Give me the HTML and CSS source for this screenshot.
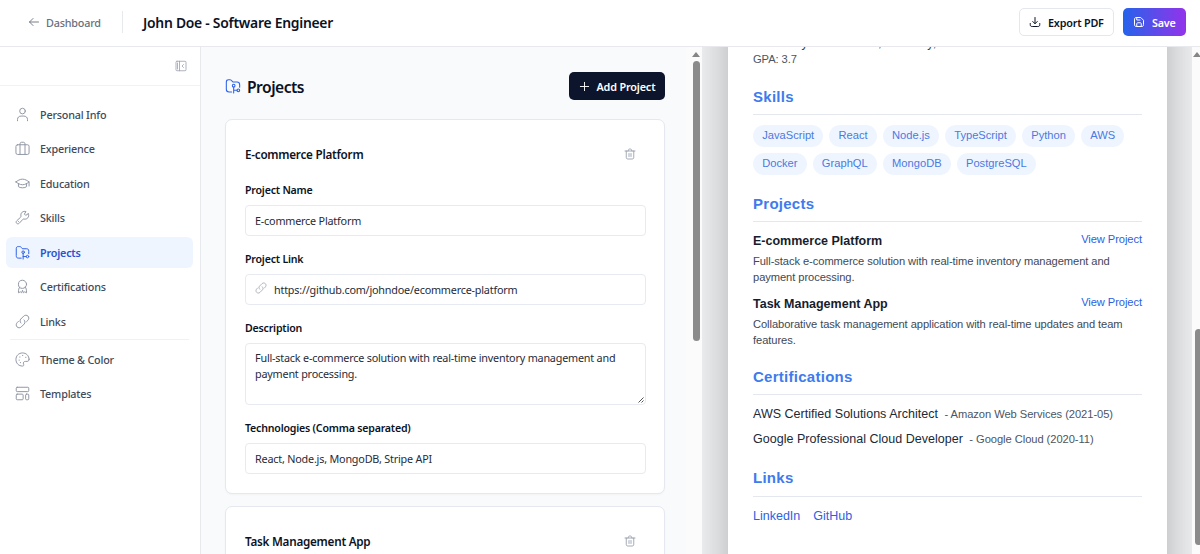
FILE: index.html
```html
<!DOCTYPE html>
<html lang="en">
<head>
<meta charset="utf-8">
<title>John Doe - Software Engineer</title>
<link rel="stylesheet" href="styles.css">
</head>
<body>
<svg class="defs" width="0" height="0">
  <symbol id="folder" viewBox="0 0 24 24"><path d="M10 21H6C3 21 2 20 2 17V6C2 3.500 3 2.500 5.500 2.500H7.500C9.300 2.500 9.800 3.300 10.500 4.500C11 5.500 11.500 6 12.500 6H18C21 6 22 7 22 10V14"/><circle cx="13" cy="11.500" r="2"/><path d="M13 13.500V22.500M13 18.500H18"/><circle cx="20" cy="18.500" r="2"/></symbol>
  <symbol id="link" viewBox="0 0 24 24"><path d="M9.500 14.500C7.500 12.500 7.500 9.800 9.300 8L14 3.300C16 1.500 18.800 1.500 20.700 3.300C22.500 5.200 22.500 8 20.700 10L18.500 12.200"/><path d="M14.500 9.500C16.500 11.500 16.500 14.200 14.700 16L10 20.700C8 22.500 5.200 22.500 3.300 20.700C1.500 18.800 1.500 16 3.300 14L5.500 11.800"/></symbol>
  <symbol id="trash" viewBox="0 0 24 24"><path d="M4.500 6V18.500C4.500 21 5.500 22 8 22H16C18.500 22 19.500 21 19.500 18.500V6M2 6H22M8 6L9 3.500C9.500 2.300 10 2 11 2H13C14 2 14.500 2.300 15 3.500L16 6M10 11V17M14 11V17"/></symbol>
</svg>
<header class="topbar">
  <a class="back"><svg class="icon back-icon" viewBox="0 0 24 24"><path d="M21 12H3M10 5L3 12L10 19"/></svg><span>Dashboard</span></a>
  <h1 class="doc-title">John Doe - Software Engineer</h1>
  <div class="actions">
    <button class="btn export"><svg class="icon" viewBox="0 0 24 24"><path d="M12 3V15M7.500 11L12 15.500L16.500 11M2.500 15V17C2.500 20 3.500 21 6.500 21H17.500C20.500 21 21.500 20 21.500 17V15"/></svg><span>Export PDF</span></button>
    <button class="btn save"><svg class="icon" viewBox="0 0 24 24"><path d="M3 7C3 4 4 3 7 3H15.500L21 8.500V17C21 20 20 21 17 21H7C4 21 3 20 3 17ZM7.500 21V16C7.500 14 8 13.500 10 13.500H14C16 13.500 16.500 14 16.500 16V21M7.500 3V8H14"/></svg><span>Save</span></button>
  </div>
</header>
<main class="workspace">
  <aside class="sidebar">
    <div class="collapse"><svg class="icon" viewBox="0 0 24 24"><rect x="2" y="2.500" width="20" height="19" rx="2"/><path d="M9 2.500V21.500M5 6V18M17 9L14 12L17 15"/></svg></div>
    <nav class="nav">
      <a class="item"><svg class="icon" viewBox="0 0 24 24"><circle cx="12" cy="6.500" r="4.500"/><path d="M4 22V20C4 16.500 6.500 14.500 10 14.500H14C17.500 14.500 20 16.500 20 20V22"/></svg><span>Personal Info</span></a>
      <a class="item"><svg class="icon" viewBox="0 0 24 24"><rect x="1.500" y="6" width="21" height="15.500" rx="2.500"/><path d="M8 21.500V5C8 3 9 2 10.500 2H13.500C15 2 16 3 16 5V21.500"/></svg><span>Experience</span></a>
      <a class="item"><svg class="icon" viewBox="0 0 24 24"><path d="M1.500 9.500C4 7.500 8 5 12 5C16 5 20 7.500 22.500 9.500C20 11.500 16 14 12 14C8 14 4 11.500 1.500 9.500ZM5.500 12V17C8 19.500 16 19.500 18.500 17V12M22.500 9.500V16"/></svg><span>Education</span></a>
      <a class="item"><svg class="icon" viewBox="0 0 24 24"><path d="M20.500 6.500L17 8.500L15 6.500L17.500 2.500C13 1 8.500 4.500 9.500 9.500C9.700 10.500 9.500 11 9 11.500L3 17C1.500 18.500 1.500 20 2.700 21.300C4 22.500 5.500 22.500 7 21L12.500 15C13 14.500 13.500 14.300 14.500 14.500C19.500 15.500 23.500 11 21.500 6Z"/><path d="M5.500 18.500H5.600"/></svg><span>Skills</span></a>
      <a class="item active"><svg class="icon"><use href="#folder"/></svg><span>Projects</span></a>
      <a class="item"><svg class="icon" viewBox="0 0 24 24"><circle cx="12" cy="8.500" r="6.500"/><path d="M7.500 13C6 14.500 5.500 17.500 5.500 22L8.500 20.500L10.500 22L12 18L13.500 22L15.500 20.500L18.500 22C18.500 17.500 18 14.500 16.500 13"/></svg><span>Certifications</span></a>
      <a class="item"><svg class="icon"><use href="#link"/></svg><span>Links</span></a>
      <hr class="nav-rule">
      <a class="item"><svg class="icon" viewBox="0 0 24 24"><path d="M22.500 11.500C22.500 6 18 1.500 12 1.500S1.500 6 1.500 12S6 22.500 12 22.500C14 22.500 14.500 21 13.700 19.500C12.500 17 14 15 17 15H19.500C21.500 15 22.500 14 22.500 11.500Z"/><path d="M6.500 13H7M7.500 8H8M12 5.500H12.500M17 8.500H17.500M8.500 17H9"/></svg><span>Theme &amp; Color</span></a>
      <a class="item"><svg class="icon" viewBox="0 0 24 24"><rect x="2" y="2" width="20" height="7" rx="1.500"/><rect x="2" y="13" width="11" height="9" rx="1.500"/><rect x="17" y="13" width="5" height="9" rx="1.500"/></svg><span>Templates</span></a>
    </nav>
  </aside>
  <section class="editor">
    <div class="editor-body">
      <div class="editor-head">
        <svg class="icon head-icon"><use href="#folder"/></svg>
        <h2>Projects</h2>
        <button class="btn add"><svg class="icon" viewBox="0 0 24 24"><path d="M12 3V21M3 12H21"/></svg><span>Add Project</span></button>
      </div>
      <article class="card">
        <div class="card-head"><h3>E-commerce Platform</h3><svg class="icon trash"><use href="#trash"/></svg></div>
        <div class="field"><label>Project Name</label><div class="input">E-commerce Platform</div></div>
        <div class="field"><label>Project Link</label><div class="input"><svg class="icon input-icon"><use href="#link"/></svg><span class="url">https://github.com/johndoe/ecommerce-platform</span></div></div>
        <div class="field"><label>Description</label><div class="input area"><span class="desc">Full-stack e-commerce solution with real-time inventory management and<br>payment processing.</span><svg class="grip" viewBox="0 0 6 6"><path d="M0.500 5.500L5.500 0.500M3.500 5.500L5.500 3.500"/></svg></div></div>
        <div class="field"><label>Technologies (Comma separated)</label><div class="input">React, Node.js, MongoDB, Stripe API</div></div>
      </article>
      <article class="card">
        <div class="card-head"><h3>Task Management App</h3><svg class="icon trash"><use href="#trash"/></svg></div>
      </article>
    </div>
    <div class="scrollbar"><i class="arrow"></i><i class="thumb"></i></div>
  </section>
  <section class="preview">
    <div class="paper">
      <p class="school">University of California, Berkeley,</p>
      <p class="gpa">GPA: 3.7</p>
      <h2 class="sec">Skills</h2>
      <div class="chips"><span>JavaScript</span><span>React</span><span>Node.js</span><span>TypeScript</span><span>Python</span><span>AWS</span><span>Docker</span><span>GraphQL</span><span>MongoDB</span><span>PostgreSQL</span></div>
      <h2 class="sec">Projects</h2>
      <div class="project"><div class="project-head"><h3>E-commerce Platform</h3><a>View Project</a></div><p>Full-stack e-commerce solution with real-time inventory management and<br>payment processing.</p></div>
      <div class="project"><div class="project-head"><h3>Task Management App</h3><a>View Project</a></div><p>Collaborative task management application with real-time updates and team<br>features.</p></div>
      <h2 class="sec">Certifications</h2>
      <div class="certs">
        <p>AWS Certified Solutions Architect <small>- Amazon Web Services (2021-05)</small></p>
        <p>Google Professional Cloud Developer <small>- Google Cloud (2020-11)</small></p>
      </div>
      <h2 class="sec link-sec">Links</h2>
      <div class="links"><a>LinkedIn</a><a>GitHub</a></div>
    </div>
    <div class="scrollbar side"><i class="arrow"></i><i class="thumb"></i></div>
  </section>
</main>
</body>
</html>
```
FILE: styles.css
```css
* { box-sizing: border-box; margin: 0; padding: 0; }
body { width: 1200px; height: 554px; overflow: hidden; background: #fff; color: #0b1224; font-family: "Noto Sans", "Open Sans", sans-serif; font-size: 10.8px; letter-spacing: -.2px; }
button { font: inherit; letter-spacing: inherit; border: 0; }
span, h1, h2, h3, label { white-space: nowrap; }
.defs { position: absolute; }
.icon { width: 15px; height: 15px; flex: none; fill: none; stroke: currentColor; stroke-width: 1.6; stroke-linecap: round; stroke-linejoin: round; }

.topbar { height: 47px; border-bottom: 1px solid #e7e9ed; display: flex; align-items: center; padding: 0 14px 2px 28px; }
.back { display: flex; align-items: center; gap: 6px; width: 95px; height: 22px; border-right: 1px solid #e7e9ed; color: #667080; font-weight: 500; }
.back .icon { width: 12px; height: 12px; stroke-width: 1.8; }
.doc-title { margin: 1px 0 0 20px; font-size: 13.9px; font-weight: 600; letter-spacing: -.26px; }
.actions { margin-left: auto; display: flex; gap: 9px; }
.btn { height: 28px; border-radius: 5px; display: flex; align-items: center; font-weight: 600; }
.export { width: 95px; background: #fff; border: 1px solid #e5e7ee; padding-left: 9px; gap: 7px; color: #0b1224; }
.save { width: 63px; padding-left: 10px; gap: 7px; color: #fff; background: linear-gradient(90deg, #2563eb, #9333ea); }
.export .icon, .save .icon { width: 12px; height: 12px; stroke-width: 2; }

.workspace { display: flex; height: 507px; }
.sidebar { width: 201px; border-right: 1px solid #e7e9ed; background: #fff; }
.collapse { height: 39px; border-bottom: 1px solid #f1f2f4; display: flex; align-items: center; justify-content: flex-end; padding-right: 13px; color: #9a9fae; }
.collapse .icon { width: 12px; height: 12px; }
.nav { padding: 13px 7px 0 6px; display: flex; flex-direction: column; gap: 3.55px; }
.item { height: 31px; border-radius: 6px; display: flex; align-items: center; gap: 10px; padding: 0 0 1px 9px; color: #414b5a; font-weight: 500; }
.item .icon { color: #9298a5; }
.item.active { background: #eff5ff; color: #2853d0; font-weight: 600; }
.item.active .icon { color: #2f62e6; }
.nav-rule { border: 0; height: 1px; background: #f0f1f4; margin: -1.5px 4px .5px; }

.editor { width: 501px; background: #f8fafc; display: flex; overflow: hidden; }
.editor-body { width: 485px; padding: 25px 21px 0 24px; display: flex; flex-direction: column; gap: 12.5px; }
.editor-head { display: flex; align-items: center; height: 28px; margin-bottom: 6.5px; }
.head-icon { width: 16px; height: 16px; color: #2f62e6; }
.editor-head h2 { margin-left: 6px; font-size: 15.6px; font-weight: 600; letter-spacing: -.5px; padding-top: 2px; }
.add { margin-left: auto; width: 96.5px; background: #0c152b; color: #fff; padding: 1px 0 0 10px; gap: 7px; letter-spacing: -.15px; }
.add .icon { width: 11px; height: 11px; stroke-width: 2; }
.card { background: #fff; border: 1px solid #e5e8ee; border-radius: 7px; padding: 19px 18px 18.5px 19px; flex: none; box-shadow: 0 1px 2px #00000008; }
.card-head { height: 30px; display: flex; align-items: center; justify-content: space-between; padding-right: 10px; }
.card-head h3 { font-size: 11.7px; font-weight: 600; letter-spacing: -.25px; }
.trash { width: 12px; height: 12px; color: #8e96a5; }
.field { margin-top: 15px; }
.card-head + .field { margin-top: 13px; }
.field label { display: block; height: 16px; line-height: 16px; font-weight: 600; font-size: 10.6px; margin-bottom: 7px; }
.input { height: 31px; border: 1px solid #e7eaf0; border-radius: 4px; padding: 0 9px; display: flex; align-items: center; color: #262b37; }
.input-icon { width: 12px; height: 12px; color: #9da3b0; margin: -4px 7px 0 0; }
.area { height: 62px; position: relative; align-items: flex-start; padding-top: 6px; line-height: 16px; }
.grip { position: absolute; right: 1px; bottom: 1px; width: 6px; height: 6px; stroke: #555; stroke-width: 1; fill: none; }
.scrollbar { width: 16px; background: #fbfbfc; display: flex; flex-direction: column; align-items: center; padding: 5px 0 0 4px; }
.arrow { border: 4px solid transparent; border-top: 0; border-bottom: 5px solid #858585; flex: none; }
.thumb { width: 7px; height: 280px; margin-top: 4px; border-radius: 4px; background: #8b8b8b; flex: none; }

.preview { width: 498px; background: #f3f4f6; position: relative; display: flex; overflow: hidden; justify-content: space-between; padding-left: 26px; font-family: "Liberation Sans", Arial, sans-serif; font-size: 11.15px; letter-spacing: -.07px; }
.paper { width: 439px; height: 620px; margin-top: -60px; padding: 48px 25px 0; background: #fff; box-shadow: 0 0 45px rgba(0,0,0,.3); flex: none; }
.side { width: 8px; position: relative; padding: 5px 0 0 1px; align-items: flex-start; }
.side .thumb { margin-top: 272px; margin-left: 2px; height: 216px; }
.school { font-size: 12.5px; line-height: 16px; color: #374151; letter-spacing: 0; }
.gpa { line-height: 16px; color: #4b5563; }
.sec { height: 27px; border-bottom: 1px solid #e4e8ee; font-size: 15px; line-height: 18px; letter-spacing: .27px; color: #3e7bed; margin-top: 20px; }
.gpa + .sec { margin-top: 21px; }
.chips { display: flex; flex-wrap: wrap; gap: 6px; margin-top: 10px; padding-right: 10px; letter-spacing: 0; }
.chips span { height: 22px; line-height: 21px; border-radius: 11px; padding: 0 9.2px; background: #eff5ff; color: #4a7ae0; }
.project { height: 63px; padding-top: 10px; }
.project-head { display: flex; justify-content: space-between; height: 22px; line-height: 18px; }
.project-head h3 { font-size: 12.5px; color: #161d2d; letter-spacing: 0; }
.project-head a { line-height: 15px; color: #2d61df; }
.project p { line-height: 15.6px; color: #414956; white-space: nowrap; }
.certs { padding-top: 10px; }
.certs p { height: 25px; line-height: 18px; font-size: 12.5px; color: #202938; letter-spacing: .02px; }
.certs small { margin-left: 3px; font-size: 11.15px; letter-spacing: -.05px; color: #4b5563; }
.link-sec { height: 28px; margin-top: 14px; }
.links { display: flex; gap: 13px; margin-top: 10px; font-size: 12.5px; line-height: 18px; letter-spacing: 0; color: #2d61df; }
```
